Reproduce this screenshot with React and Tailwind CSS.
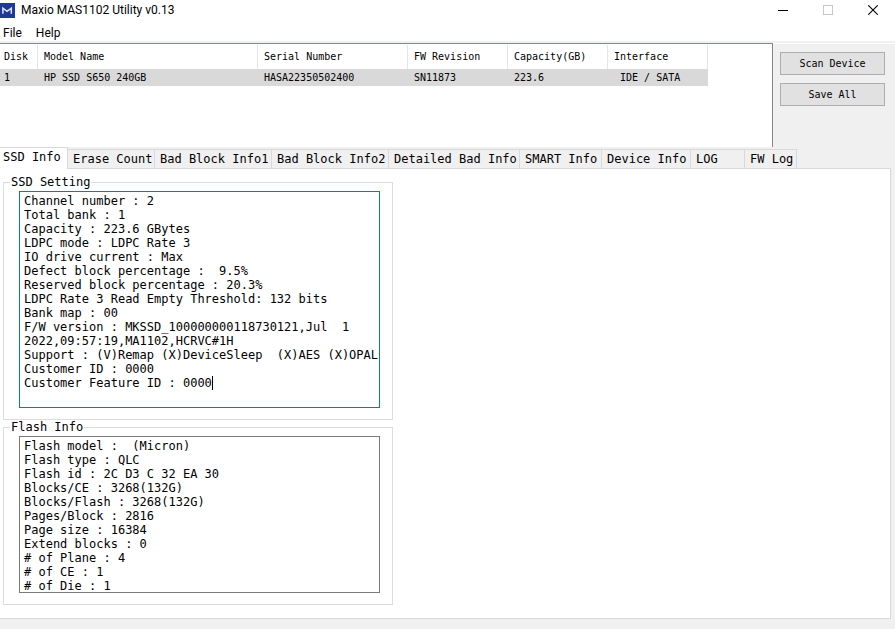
import { useState } from "react";

const COLUMNS = [
  { label: "Disk", width: "w-[38px]" },
  { label: "Model Name", width: "w-[220px]" },
  { label: "Serial Number", width: "w-[150px]" },
  { label: "FW Revision", width: "w-[100px]" },
  { label: "Capacity(GB)", width: "w-[100px]" },
  { label: "Interface", width: "w-[100px]" },
];

const DISKS = [["1", "HP SSD S650 240GB", "HASA22350502400", "SN11873", "223.6", " IDE / SATA"]];

const TABS = [
  { label: "SSD Info", width: "w-[68px]" },
  { label: "Erase Count", width: "w-[87px]" },
  { label: "Bad Block Info1", width: "w-[117px]" },
  { label: "Bad Block Info2", width: "w-[117px]" },
  { label: "Detailed Bad Info", width: "w-[131px]" },
  { label: "SMART Info", width: "w-[82px]" },
  { label: "Device Info", width: "w-[89px]" },
  { label: "LOG", width: "w-[54px]" },
  { label: "FW Log", width: "w-[52px]" },
];

const SSD_SETTING = `Channel number : 2
Total bank : 1
Capacity : 223.6 GBytes
LDPC mode : LDPC Rate 3
IO drive current : Max
Defect block percentage :  9.5%
Reserved block percentage : 20.3%
LDPC Rate 3 Read Empty Threshold: 132 bits
Bank map : 00
F/W version : MKSSD_100000000118730121,Jul  1 2022,09:57:19,MA1102,HCRVC#1H
Support : (V)Remap (X)DeviceSleep  (X)AES (X)OPAL
Customer ID : 0000
Customer Feature ID : 0000`;

const FLASH_INFO = `Flash model :  (Micron)
Flash type : QLC
Flash id : 2C D3 C 32 EA 30
Blocks/CE : 3268(132G)
Blocks/Flash : 3268(132G)
Pages/Block : 2816
Page size : 16384
Extend blocks : 0
# of Plane : 4
# of CE : 1
# of Die : 1`;

function TitleBar() {
  return (
    <header className="flex h-5 items-center bg-white">
      <svg className="h-[15px] w-[15px]" viewBox="0 0 15 15" aria-hidden="true">
        <rect width="15" height="15" fill="#1f3a93" />
        <path d="M2.9 10.8V5.2l4.2 3.2 4.2-3.2v5.6" fill="none" stroke="#dfe4f4" strokeWidth="1.5" />
      </svg>
      <h1 className="ml-1.5 flex-1 text-[12px] leading-5">Maxio MAS1102 Utility v0.13</h1>
      <div className="flex">
        <button aria-label="Minimize" className="grid h-5 w-[45px] place-items-center">
          <svg width="10" height="10" viewBox="0 0 10 10" shapeRendering="crispEdges">
            <path d="M0 5.5h10" stroke="#000" />
          </svg>
        </button>
        <button aria-label="Maximize" disabled className="grid h-5 w-[45px] place-items-center">
          <svg width="10" height="10" viewBox="0 0 10 10" shapeRendering="crispEdges">
            <rect x="0.5" y="0.5" width="9" height="9" fill="none" stroke="#c8c8c8" />
          </svg>
        </button>
        <button aria-label="Close" className="grid h-5 w-[45px] place-items-center">
          <svg width="10" height="10" viewBox="0 0 10 10">
            <path d="M0.3 0.3l9.4 9.4M9.7 0.3l-9.4 9.4" stroke="#000" strokeWidth="1.1" />
          </svg>
        </button>
      </div>
    </header>
  );
}

function MenuBar() {
  return (
    <nav className="flex h-[21px] items-center gap-3.5 bg-white pt-1 pl-[3px] text-[12px] leading-4">
      <button>File</button>
      <button>Help</button>
    </nav>
  );
}

function DiskTable() {
  return (
    <div className="min-w-0 flex-1 border-t border-r border-[#828790] bg-white pt-px">
      <table className="table-fixed border-separate border-spacing-0 text-left text-[10px] leading-4">
        <thead>
          <tr className="h-6">
            {COLUMNS.map((col) => (
              <th
                key={col.label}
                className={`${col.width} border-r border-[#e5e5e5] p-0 pl-1.5 font-normal whitespace-pre first:pl-1`}
              >
                {col.label}
              </th>
            ))}
          </tr>
        </thead>
        <tbody>
          {DISKS.map((disk) => (
            <tr key={disk[0]} className="h-[17px] bg-[#d9d9d9]">
              {disk.map((value, i) => (
                <td key={i} className="p-0 pl-1.5 whitespace-pre first:pl-1">
                  {value}
                </td>
              ))}
            </tr>
          ))}
        </tbody>
      </table>
    </div>
  );
}

function PushButton({ children }) {
  return (
    <button className="h-[23px] w-full border border-[#adadad] bg-[#e1e1e1] text-[10px] leading-4">
      {children}
    </button>
  );
}

function TabStrip({ active, onSelect }) {
  return (
    <div role="tablist" className="flex h-[22px] items-end">
      {TABS.map((tab, i) => {
        const selected = i === active;
        return (
          <button
            key={tab.label}
            role="tab"
            aria-selected={selected}
            onClick={() => onSelect(i)}
            className={`${tab.width} border-r border-t border-[#d9d9d9] text-left text-[12px] leading-4 whitespace-nowrap ${
              selected ? "h-[22px] bg-white pb-1 pl-[3px]" : "h-5 border-b bg-[#f0f0f0] pl-[5px]"
            }`}
          >
            {tab.label}
          </button>
        );
      })}
      <div className="mr-1 h-px flex-1 bg-[#d9d9d9]" />
    </div>
  );
}

function GroupBox({ id, title, value, boxHeight, caret }) {
  return (
    <section className="w-[390px] border border-[#dcdcdc] px-[15px] pb-[11px]">
      <label
        htmlFor={id}
        className="-mt-2 mb-0.5 -ml-[9px] block w-fit bg-white px-px text-[12px] leading-[14px]"
      >
        {title}
      </label>
      <div className="relative">
        <textarea
          id={id}
          readOnly
          value={value}
          className={`${boxHeight} block w-[361px] resize-none overflow-hidden border bg-white pt-0.5 pl-1 text-[12px] leading-[14px] outline-none ${
            caret ? "border-[#0078d7]" : "border-[#7a7a7a]"
          }`}
        />
        {caret ? <span className="absolute top-[185px] left-[193px] h-3.5 w-px bg-black" /> : null}
      </div>
    </section>
  );
}

export default function App() {
  const [active, setActive] = useState(0);

  return (
    <div className="flex min-h-screen flex-col bg-[#f0f0f0] font-['DejaVu_Sans_Mono',monospace] text-black">
      <div className="font-['Roboto',sans-serif]">
        <TitleBar />
        <MenuBar />
      </div>

      <div className="mt-0.5 flex h-[104px]">
        <DiskTable />
        <aside className="flex w-[122px] flex-col gap-2 border-t border-white pt-2 pr-2.5 pl-[7px]">
          <PushButton>Scan Device</PushButton>
          <PushButton>Save All</PushButton>
        </aside>
      </div>

      <main className="flex flex-1 flex-col pb-2.5">
        <TabStrip active={active} onSelect={setActive} />
        <div
          role="tabpanel"
          className="mr-1 flex flex-1 flex-col gap-[7px] border-r border-b border-[#d9d9d9] bg-white pt-[13px] pb-3 pl-[3px]"
        >
          <GroupBox
            id="ssd-setting"
            title="SSD Setting"
            value={SSD_SETTING}
            boxHeight="h-[217px]"
            caret
          />
          <GroupBox id="flash-info" title="Flash Info" value={FLASH_INFO} boxHeight="h-[157px]" />
        </div>
      </main>
    </div>
  );
}
